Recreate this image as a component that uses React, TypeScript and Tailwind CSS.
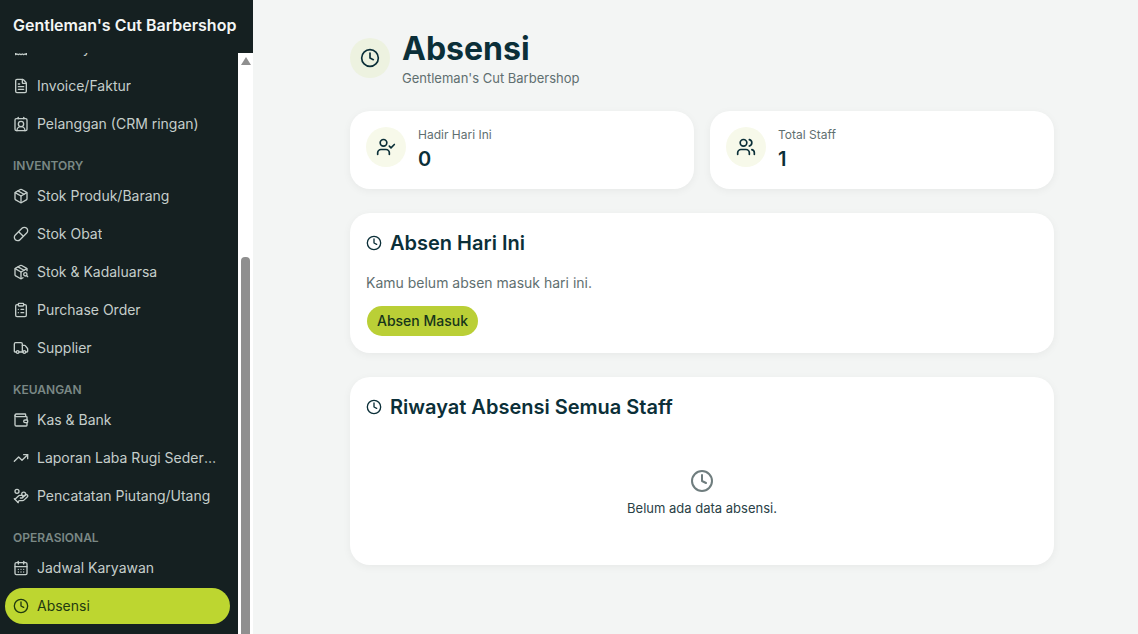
import React from "react";
import {
  Receipt, FileText, ContactRound, Package, Pill, PackageSearch, ClipboardList, Truck, Wallet,
  TrendingUp, HandCoins, CalendarDays, Clock, UserCheck, Users,
} from "lucide-react";

const Row = ({ icon: Icon, label, active }: { icon: any; label: string; active?: boolean }) => (
  <div
    className={
      "flex h-9 items-center gap-2 rounded-[18px] px-2 text-sm " +
      (active ? "bg-[#bdd630] text-[#1f3a10]" : "text-[#c5cecb]")
    }
  >
    <Icon className="h-4 w-4 shrink-0" strokeWidth={2} />
    <span className="truncate">{label}</span>
  </div>
);

const Label = ({ children }: { children: React.ReactNode }) => (
  <div className="flex h-8 items-end px-2 pb-[2px] text-xs font-semibold uppercase text-[#7a8885]">{children}</div>
);

const Sidebar = () => (
  <aside className="flex h-[634px] w-[253px] shrink-0 flex-col bg-[#152021]">
    <div className="flex h-[53px] shrink-0 items-center px-[13px] pb-[4px] text-base font-semibold text-[#f3f6f5]">
      Gentleman's Cut Barbershop
    </div>
    <div className="flex min-h-0 flex-1">
      <div className="min-h-0 flex-1 overflow-hidden pl-[5px] pr-2">
        <div className="-mt-[23px] flex flex-col gap-0.5">
          <Row icon={Receipt} label="Pembayaran" />
          <Row icon={FileText} label="Invoice/Faktur" />
          <Row icon={ContactRound} label="Pelanggan (CRM ringan)" />
          <Label>Inventory</Label>
          <Row icon={Package} label="Stok Produk/Barang" />
          <Row icon={Pill} label="Stok Obat" />
          <Row icon={PackageSearch} label="Stok & Kadaluarsa" />
          <Row icon={ClipboardList} label="Purchase Order" />
          <Row icon={Truck} label="Supplier" />
          <Label>Keuangan</Label>
          <Row icon={Wallet} label="Kas & Bank" />
          <Row icon={TrendingUp} label="Laporan Laba Rugi Sederhana" />
          <Row icon={HandCoins} label="Pencatatan Piutang/Utang" />
          <Label>Operasional</Label>
          <Row icon={CalendarDays} label="Jadwal Karyawan" />
          <Row icon={Clock} label="Absensi" active />
        </div>
      </div>
      <div className="flex w-[15px] shrink-0 flex-col bg-white">
        <div className="flex h-[204px] shrink-0 justify-center pt-[4px]">
          <div className="h-0 w-0 border-x-[5px] border-b-[8px] border-x-transparent border-b-[#8f8f8f]" />
        </div>
        <div className="ml-[3px] w-[9px] flex-1 rounded-t-[4px] bg-[#8f8f8f]" />
      </div>
    </div>
  </aside>
);

const Stat = ({ icon: Icon, label, value }: { icon: any; label: string; value: string }) => (
  <div className="flex h-[78px] flex-1 items-start gap-3 rounded-[20px] bg-white p-4 shadow-[0_2px_8px_rgba(0,0,0,0.05)]">
    <div className="flex h-10 w-10 items-center justify-center rounded-full bg-[#f7f9ea] text-[#0b2f38]">
      <Icon className="h-5 w-5" />
    </div>
    <div>
      <div className="pt-px text-xs leading-[14px] text-[#5f6f70]">{label}</div>
      <div className="mt-[3px] text-xl font-semibold leading-7 text-[#0b2f38]">{value}</div>
    </div>
  </div>
);

const CardTitle = ({ children }: { children: React.ReactNode }) => (
  <div className="flex items-center gap-2 text-xl font-semibold leading-7 text-[#0b2f38]">
    <Clock className="h-4 w-4" />
    {children}
  </div>
);

export default function App() {
  return (
    <div className="flex h-[634px] w-full overflow-hidden bg-[#f3f5f4] font-['Inter',sans-serif]">
      <Sidebar />
      <main className="flex-1 pl-[97px] pt-[29px]">
        <div className="flex w-[704px] flex-col">
          <div className="flex items-start gap-3">
            <div className="mt-[9px] flex h-10 w-10 items-center justify-center rounded-full bg-[#edf2e0] text-[#0b2f38]">
              <Clock className="h-5 w-5" />
            </div>
            <div>
              <h1 className="text-[32px] font-bold leading-10 text-[#0b2f38]">Absensi</h1>
              <p className="-mt-px pb-px text-[13px] leading-5 text-[#5f6f70]">Gentleman's Cut Barbershop</p>
            </div>
          </div>
          <div className="mt-[22px] flex gap-4">
            <Stat icon={UserCheck} label="Hadir Hari Ini" value="0" />
            <Stat icon={Users} label="Total Staff" value="1" />
          </div>
          <section className="mt-6 h-[140px] rounded-[20px] bg-white px-4 pt-4 shadow-[0_2px_8px_rgba(0,0,0,0.05)]">
            <CardTitle>Absen Hari Ini</CardTitle>
            <p className="mt-[16px] text-sm leading-5 text-[#5f6f70]">Kamu belum absen masuk hari ini.</p>
            <button className="ml-px mt-[13px] flex h-[30px] items-center rounded-full bg-[#bacf36] px-[10px] text-sm font-medium text-[#16351a]">
              Absen Masuk
            </button>
          </section>
          <section className="mt-6 h-[188px] rounded-[20px] bg-white px-4 pt-4 shadow-[0_2px_8px_rgba(0,0,0,0.05)]">
            <CardTitle>Riwayat Absensi Semua Staff</CardTitle>
            <div className="mt-[48px] flex flex-col items-center">
              <Clock className="h-6 w-6 text-[#6f7d7e]" />
              <p className="mt-[5px] text-[13px] leading-5 text-[#2a4146]">Belum ada data absensi.</p>
            </div>
          </section>
        </div>
      </main>
    </div>
  );
}
